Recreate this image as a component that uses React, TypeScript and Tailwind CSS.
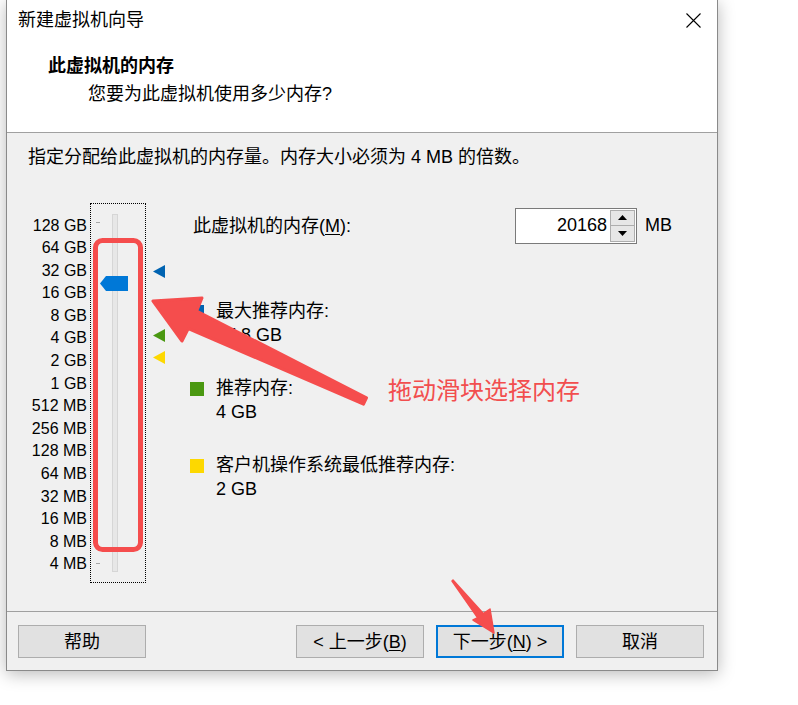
import React from 'react';

const labels = ['128 GB', '64 GB', '32 GB', '16 GB', '8 GB', '4 GB', '2 GB', '1 GB', '512 MB', '256 MB', '128 MB', '64 MB', '32 MB', '16 MB', '8 MB', '4 MB'];

const Marker = ({ color, top }: { color: string; top: string }) => (
    <svg width="12" height="13" viewBox="0 0 12 13" className={`absolute left-[7px] ${top}`}>
        <polygon points="0,6.5 12,0 12,13" fill={color} />
    </svg>
);

const LegendItem = ({ color, title, value, className }: { color: string; title: string; value: string; className: string }) => (
    <div className={`flex items-start ${className}`}>
        <div className={`w-[14px] h-[14px] mt-[6px] shrink-0 ${color}`} />
        <div className="ml-[12px] leading-[24px]">
            <div>{title}</div>
            <div>{value}</div>
        </div>
    </div>
);

const WizButton = ({ children, primary, className = '' }: { children: React.ReactNode; primary?: boolean; className?: string }) => (
    <button
        className={`w-[128px] h-[33px] bg-[#e1e1e1] flex items-center justify-center text-[18px] leading-none text-black ${
            primary ? 'border-2 border-[#0078d7]' : 'border border-[#adadad]'
        } ${className}`}
    >
        {children}
    </button>
);

export default function App() {
    return (
        <div className="relative w-[798px] h-[705px] bg-white overflow-hidden font-['Liberation_Sans','Noto_Sans_CJK_SC',sans-serif] text-black text-[18px]">
            <div className="ml-[6px] w-[712px] h-[671px] border-x border-b border-[#8a8a8a] bg-[#f0f0f0] shadow-[0_3px_16px_rgba(0,0,0,0.28)] flex flex-col">
                {/* Header */}
                <div className="h-[133px] bg-white border-b border-[#a0a0a0] shrink-0">
                    <div className="h-[40px] flex items-center justify-between pl-[11px] pr-[16px]">
                        <span className="leading-[24px]">新建虚拟机向导</span>
                        <svg width="15" height="15" viewBox="0 0 15 15">
                            <path d="M0.5 0.5 L14.5 14.5 M14.5 0.5 L0.5 14.5" stroke="#000" strokeWidth="1.1" />
                        </svg>
                    </div>
                    <div className="mt-[14px] pl-[41px] leading-[24px] font-bold">此虚拟机的内存</div>
                    <div className="mt-[4px] pl-[81px] leading-[24px]">您要为此虚拟机使用多少内存?</div>
                </div>

                {/* Body */}
                <div className="h-[478px] shrink-0 flex flex-col">
                    <div className="mt-[12px] pl-[21px] leading-[24px]">指定分配给此虚拟机的内存量。内存大小必须为 4 MB 的倍数。</div>
                    <div className="flex items-start mt-[34px]">
                        <div className="w-[80px] pt-[11.5px] flex flex-col text-[16px] text-right">
                            {labels.map((l) => (
                                <div key={l} className="h-[22.6px] leading-[22.6px]">{l}</div>
                            ))}
                        </div>
                        <div className="relative ml-[3px] w-[56px] h-[380px] border border-dotted border-black">
                            <div className="absolute left-[5px] top-[18px] w-[4px] h-px bg-[#a8a8a8]" />
                            <div className="absolute left-[5px] top-[359px] w-[4px] h-px bg-[#a8a8a8]" />
                            <div className="absolute left-[21px] top-[10px] w-[6px] h-[358px] bg-[#e7e7e7] border border-[#d6d6d6]" />
                            <svg width="28" height="15" viewBox="0 0 28 15" className="absolute left-[9px] top-[72px]">
                                <polygon points="0,7.5 6,0 28,0 28,15 6,15" fill="#0078d7" />
                            </svg>
                        </div>
                        <div className="relative w-[44px] h-[380px]">
                            <Marker color="#0063b1" top="top-[62px]" />
                            <Marker color="#4a9811" top="top-[126px]" />
                            <Marker color="#fdd800" top="top-[148px]" />
                        </div>
                        <div className="flex-1 flex flex-col">
                            <div className="mt-[5px] h-[35px] flex items-center">
                                <div className="w-[325px] pl-[3px] leading-[24px]">
                                    此虚拟机的内存(<span className="underline underline-offset-2">M</span>):
                                </div>
                                <div className="w-[122px] h-[36px] border border-[#7a7a7a] bg-white flex">
                                    <div className="flex-1 flex items-center justify-end pr-[3px]">20168</div>
                                    <div className="w-[25px] flex flex-col border border-[#adadad] my-px mr-px">
                                        <div className="flex-1 bg-[#e6e6e6] border-b border-[#adadad] flex items-center justify-center">
                                            <svg width="9" height="5" viewBox="0 0 9 5"><polygon points="4.5,0 9,5 0,5" fill="#000" /></svg>
                                        </div>
                                        <div className="flex-1 bg-[#e6e6e6] flex items-center justify-center">
                                            <svg width="9" height="5" viewBox="0 0 9 5"><polygon points="0,0 9,0 4.5,5" fill="#000" /></svg>
                                        </div>
                                    </div>
                                </div>
                                <div className="ml-[8px]">MB</div>
                            </div>
                            <LegendItem color="bg-[#0063b1]" title="最大推荐内存:" value="27.8 GB" className="mt-[56px]" />
                            <LegendItem color="bg-[#4a9811]" title="推荐内存:" value="4 GB" className="mt-[29px]" />
                            <LegendItem color="bg-[#fdd800]" title="客户机操作系统最低推荐内存:" value="2 GB" className="mt-[29px]" />
                        </div>
                    </div>
                </div>

                {/* Footer */}
                <div className="h-[59px] shrink-0 border-t border-[#a0a0a0] flex items-start pt-[13px] pl-[11px] pr-[13px]">
                    <WizButton>帮助</WizButton>
                    <div className="flex-1" />
                    <WizButton>&lt; 上一步(<span className="underline underline-offset-2">B</span>)</WizButton>
                    <WizButton primary className="ml-[12px]">下一步(<span className="underline underline-offset-2">N</span>) &gt;</WizButton>
                    <WizButton className="ml-[12px]">取消</WizButton>
                </div>
            </div>

            {/* Annotation overlay */}
            <svg width="798" height="705" viewBox="0 0 798 705" className="absolute inset-0 pointer-events-none">
                <rect x="95.5" y="240.5" width="45" height="309" rx="7" fill="none" stroke="#f54d4d" strokeWidth="5" />
                <polygon
                    points="153,301 202,298 196.7,311 366.5,397.8 363.5,404.2 188.3,328.5 182,341"
                    fill="#f54d4d"
                    stroke="#f54d4d"
                    strokeWidth="3"
                    strokeLinejoin="round"
                />
                <polygon
                    points="453,580 483.3,613.5 490,609 494,633 473,620 477.7,617.7 452,581"
                    fill="#f54d4d"
                    stroke="#f54d4d"
                    strokeWidth="1.5"
                    strokeLinejoin="round"
                />
            </svg>
            <div className="absolute left-[388px] top-[374px] text-[24px] leading-[30px] text-[#f24e4e] font-['Noto_Sans_CJK_SC',sans-serif]">
                拖动滑块选择内存
            </div>
        </div>
    );
}
